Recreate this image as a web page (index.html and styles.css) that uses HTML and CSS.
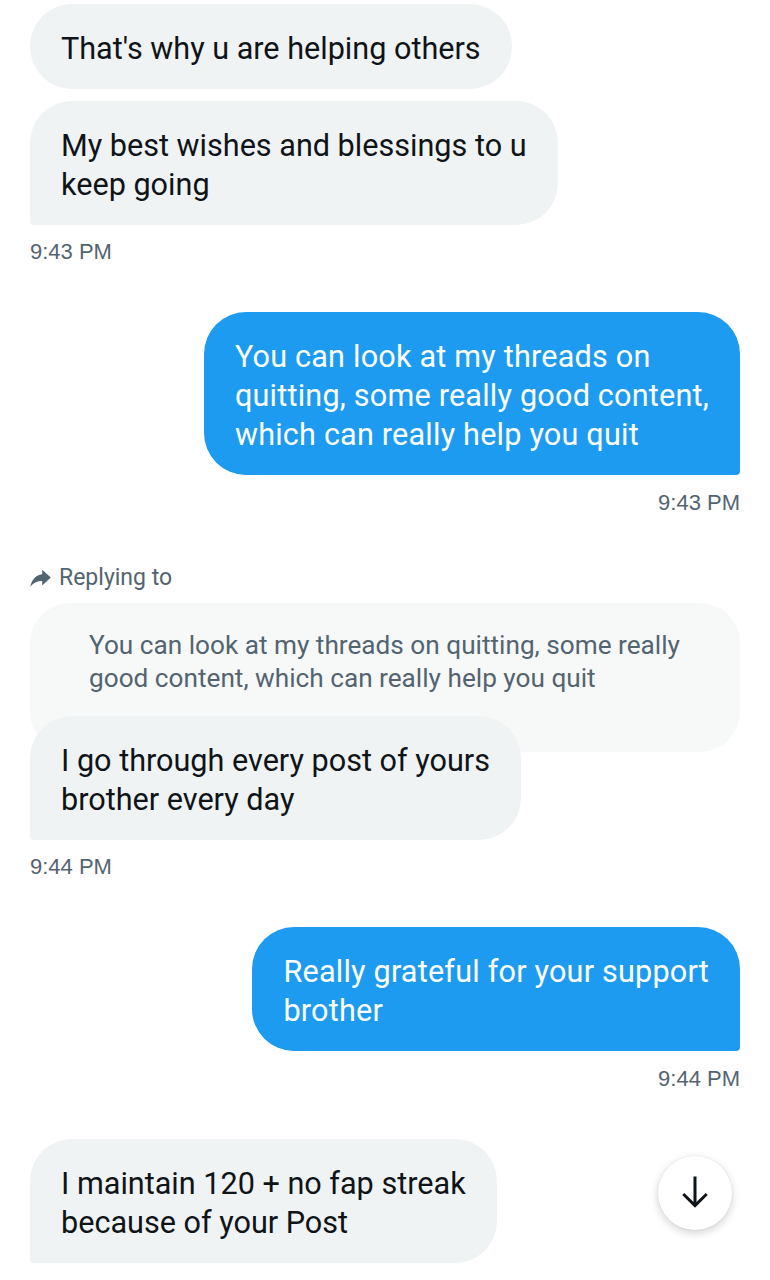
FILE: index.html
```html
<!DOCTYPE html>
<html lang="en">

<head>
    <meta charset="UTF-8">
    <meta name="viewport" content="width=device-width, initial-scale=1.0">
    <title>Messages</title>
    <link rel="stylesheet" href="styles.css">
</head>

<body>

    <div class="chat">
        <!-- incoming group -->
        <div class="group in">
            <div class="bubble">That's why u are helping others</div>
            <div class="bubble last">My best wishes and blessings to u<br>keep going</div>
            <div class="time">9:43 PM</div>
        </div>

        <!-- outgoing -->
        <div class="group out">
            <div class="bubble last">You can look at my threads on<br>quitting, some really good content,<br>which can really help you quit</div>
            <div class="time">9:43 PM</div>
        </div>

        <!-- reply -->
        <div class="group in reply-group">
            <div class="replying">
                <svg class="reply-icon" viewBox="0 0 24 24" width="24" height="24">
                    <path d="M13.2 8.2V3.8l8.6 7.8-8.6 7.8v-4.5c-5.4 0-9.1 1.9-11.8 5.8 1-6 4.5-11.4 11.8-12.5z" fill="#536471"/>
                </svg>
                <span>Replying to</span>
            </div>
            <div class="quote">You can look at my threads on quitting, some really<br>good content, which can really help you quit</div>
            <div class="bubble last over">I go through every post of yours<br>brother every day</div>
            <div class="time">9:44 PM</div>
        </div>

        <div class="group out">
            <div class="bubble last">Really grateful for your support<br>brother</div>
            <div class="time">9:44 PM</div>
        </div>

        <div class="group in">
            <div class="bubble last">I maintain 120 + no fap streak<br>because of your Post</div>
        </div>
    </div>

    <button class="scroll-down" aria-label="Scroll to bottom">
        <svg viewBox="0 0 24 24" width="38" height="38">
            <path d="M12 1.5v18.5M4.6 12.6 12 20l7.4-7.4" fill="none" stroke="#0f1419" stroke-width="1.9"/>
        </svg>
    </button>

</body>

</html>
```

FILE: styles.css
```css
body {
    font-family: Roboto, "Noto Sans", sans-serif;
    background-color: #ffffff;
    color: #0f1419;
    margin: 0;
    padding: 0;
    overflow: hidden;
}

.chat {
    display: flex;
    flex-direction: column;
    padding: 4px 30px 0;
}

.group {
    display: flex;
    flex-direction: column;
}

.group+.group {
    margin-top: 48px;
}

.group.in {
    align-items: flex-start;
}

.group.out {
    align-items: flex-end;
}

.bubble {
    font-size: 30.6px;
    line-height: 39px;
    padding: 25px 31px 21px;
    border-radius: 42px;
    background-color: #eff3f4;
    white-space: nowrap;
}

.bubble+.bubble {
    margin-top: 12px;
}

.in .bubble.last {
    border-bottom-left-radius: 4px;
}

.out .bubble {
    background-color: #1d9bf0;
    color: white;
    letter-spacing: 0.2px;
}

.out .bubble.last {
    border-bottom-right-radius: 4px;
}

.time {
    font-family: "Liberation Sans", Arial, sans-serif;
    font-size: 22px;
    line-height: 24px;
    color: #536471;
    margin-top: 15px;
}

.out .time {
    margin-top: 16px;
}

.reply-group {
    align-self: stretch;
}

.replying {
    display: flex;
    align-items: center;
    gap: 6px;
    font-size: 23px;
    line-height: 24px;
    color: #536471;
    margin-top: 3px;
}

.reply-icon {
    margin-left: -1px;
}

.quote {
    align-self: stretch;
    font-size: 26.2px;
    line-height: 33px;
    color: #536471;
    background-color: #f7f9f9;
    border-radius: 40px;
    padding: 26px 30px 57px 59px;
    margin-top: 13px;
    white-space: nowrap;
}

.bubble.over {
    margin-top: -36px;
}

.scroll-down {
    position: absolute;
    left: 658px;
    top: 1156px;
    width: 74px;
    height: 74px;
    border: none;
    border-radius: 50%;
    background-color: white;
    box-shadow: 0 3px 8px rgba(0, 0, 0, 0.18), 0 0 2px rgba(0, 0, 0, 0.08);
    display: flex;
    align-items: center;
    justify-content: center;
    padding: 0;
    cursor: pointer;
}
```
